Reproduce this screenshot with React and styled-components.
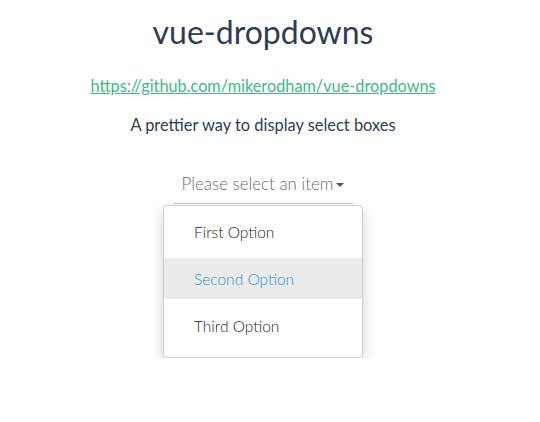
import React from 'react';
import styled, { createGlobalStyle } from 'styled-components';

const GlobalStyle = createGlobalStyle`
  html, body {
    margin: 0;
    padding: 0;
    background: #fff;
  }
  body {
    font-family: Lato, "Open Sans", sans-serif;
    color: #2c3e50;
    -webkit-font-smoothing: antialiased;
  }
`;

const Page = styled.div`
  width: 526px;
  display: flex;
  flex-direction: column;
  align-items: center;
  text-align: center;
  padding-top: 12px;
`;

const Title = styled.h1`
  margin: 0;
  font-size: 32px;
  font-weight: 400;
  line-height: 40px;
  color: #2c3e50;
`;

const RepoLink = styled.a`
  margin-top: 24px;
  font-size: 16.3px;
  line-height: 20px;
  color: #42b983;
  text-decoration: underline;
`;

const Tagline = styled.p`
  margin: 19px 0 0;
  font-size: 16.4px;
  line-height: 20px;
  color: #2c3e50;
`;

const Select = styled.div`
  margin-top: 35px;
  width: 200px;
  display: flex;
  flex-direction: column;
  align-items: center;
`;

const Toggle = styled.button`
  width: 180px;
  height: 34px;
  padding: 0 0 6px;
  border: none;
  border-bottom: 1px solid #cfcfcf;
  background: none;
  font-family: inherit;
  font-size: 16.9px;
  font-weight: 300;
  color: #6b6b6b;
  display: flex;
  align-items: center;
  justify-content: center;
  gap: 3px;
  cursor: pointer;
`;

const Caret = styled.span`
  width: 0;
  height: 0;
  border-left: 4px solid transparent;
  border-right: 4px solid transparent;
  border-top: 4px solid #555;
  margin-top: 2px;
`;

const Menu = styled.ul`
  list-style: none;
  margin: 1px 0 0;
  padding: 5px 0 11px;
  width: 198px;
  border: 1px solid #cfcfcf;
  border-radius: 4px;
  background: #fff;
  box-shadow: 0 6px 14px rgba(0, 0, 0, 0.18);
  text-align: left;
`;

const Item = styled.li`
  height: 41px;
  margin-bottom: 6px;
  padding-left: 30px;
  display: flex;
  align-items: center;
  font-size: 15.5px;
  font-weight: 300;
  color: ${(p) => (p.$active ? '#2f98d0' : '#222')};
  background: ${(p) => (p.$active ? '#ebebeb' : 'transparent')};
  &:last-child {
    margin-bottom: 0;
  }
`;

const options = ['First Option', 'Second Option', 'Third Option'];

export default function App() {
  return (
    <>
      <GlobalStyle />
      <Page>
        <Title>vue-dropdowns</Title>
        <RepoLink href="#">https://github.com/mikerodham/vue-dropdowns</RepoLink>
        <Tagline>A prettier way to display select boxes</Tagline>
        <Select>
          <Toggle>
            Please select an item
            <Caret />
          </Toggle>
          <Menu>
            {options.map((o, i) => (
              <Item key={o} $active={i === 1}>{o}</Item>
            ))}
          </Menu>
        </Select>
      </Page>
    </>
  );
}
